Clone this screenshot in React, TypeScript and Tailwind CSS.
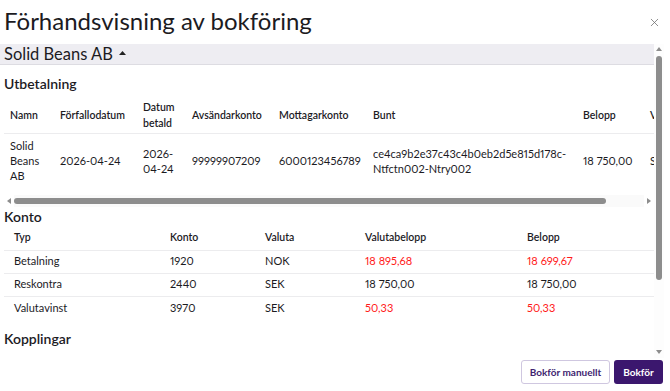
import { X } from "lucide-react";

const payout = {
  name: "Solid Beans AB",
  due: "2026-04-24",
  paid: "2026-04-24",
  from: "99999907209",
  to: "6000123456789",
  batch: "ce4ca9b2e37c43c4b0eb2d5e815d178c-Ntfctn002-Ntry002",
  amount: "18 750,00",
  currency: "SEK",
};

const accounts = [
  { type: "Betalning", account: "1920", currency: "NOK", fx: "18 895,68", amount: "18 699,67", red: true },
  { type: "Reskontra", account: "2440", currency: "SEK", fx: "18 750,00", amount: "18 750,00", red: false },
  { type: "Valutavinst", account: "3970", currency: "SEK", fx: "50,33", amount: "50,33", red: true },
];

function Arrow({ dir }: { dir: "up" | "down" | "left" | "right" }) {
  const points = {
    up: "0,4 3,0 6,4",
    down: "0,0 6,0 3,4",
    left: "4,0 4,6 0,3",
    right: "0,0 4,3 0,6",
  }[dir];
  const vertical = dir === "up" || dir === "down";
  return (
    <svg width={vertical ? 6 : 4} height={vertical ? 4 : 6} viewBox={vertical ? "0 0 6 4" : "0 0 4 6"}>
      <polygon points={points} fill="#8d8d8d" />
    </svg>
  );
}

export default function App() {
  return (
    <div className="flex h-[391px] w-[670px] flex-col bg-white font-['Lato',sans-serif] text-[#1c1b1f] proportional-nums">
      <div className="flex h-[44px] shrink-0 items-center justify-between pl-[4px] pr-[9px]">
        <h1 className="pb-[2px] text-[24px] font-normal leading-none">Förhandsvisning av bokföring</h1>
        <button type="button" className="text-[#6b6b6b]">
          <X size={13} strokeWidth={1.4} />
        </button>
      </div>

      <div className="mr-[6px] flex min-h-0 flex-1">
        <div className="min-w-0 flex-1 overflow-hidden">
          <div className="flex h-[21px] items-center gap-[6px] border-b border-[#dddce2] bg-[#eeedf2] pl-[4px] text-[16.5px] leading-none">
            <span>Solid Beans AB</span>
            <svg width="7" height="4" viewBox="0 0 7 4" className="mt-[-2px]">
              <polygon points="0,4 3.5,0 7,4" fill="#222" />
            </svg>
          </div>

          <div className="pl-[4px]">
            <h2 className="pt-[9px] pb-[3px] text-[14px] font-semibold leading-[20px]">Utbetalning</h2>

            <div className="overflow-hidden">
              <table className="w-[720px] table-fixed border-collapse text-[11px]">
                <colgroup>
                  <col className="w-[56px]" />
                  <col className="w-[83px]" />
                  <col className="w-[49px]" />
                  <col className="w-[87px]" />
                  <col className="w-[94px]" />
                  <col className="w-[210px]" />
                  <col className="w-[67px]" />
                  <col className="w-[74px]" />
                </colgroup>
                <thead>
                  <tr className="border-b border-[#ececee] text-left text-[10.5px]">
                    <th className="py-[2px] pl-[6px] font-semibold leading-[16px]">Namn</th>
                    <th className="py-[2px] font-semibold leading-[16px]">Förfallodatum</th>
                    <th className="py-[2px] font-semibold leading-[16px]">Datum betald</th>
                    <th className="py-[2px] font-semibold leading-[16px]">Avsändarkonto</th>
                    <th className="py-[2px] font-semibold leading-[16px]">Mottagarkonto</th>
                    <th className="py-[2px] font-semibold leading-[16px]">Bunt</th>
                    <th className="py-[2px] font-semibold leading-[16px]">Belopp</th>
                    <th className="py-[2px] font-semibold leading-[16px]">Valuta</th>
                  </tr>
                </thead>
                <tbody>
                  <tr className="leading-[15px]">
                    <td className="py-[4px] pl-[6px] pr-[8px]">{payout.name}</td>
                    <td>{payout.due}</td>
                    <td className="pr-[10px]">{payout.paid}</td>
                    <td>{payout.from}</td>
                    <td>{payout.to}</td>
                    <td className="pr-[10px]">{payout.batch}</td>
                    <td>{payout.amount}</td>
                    <td>{payout.currency}</td>
                  </tr>
                </tbody>
              </table>
            </div>

            <div className="mt-[8px] flex h-[12px] items-center">
              <div className="flex w-[10px] justify-center">
                <Arrow dir="left" />
              </div>
              <div className="flex h-full flex-1 items-center bg-[#fafafa]">
                <div className="h-[6px] w-[592px] rounded-full bg-[#8d8d8d]" />
              </div>
              <div className="flex w-[10px] justify-center">
                <Arrow dir="right" />
              </div>
            </div>

            <h2 className="text-[14px] font-semibold leading-[20px]">Konto</h2>

            <table className="w-full table-fixed border-collapse text-[11px]">
              <colgroup>
                <col className="w-[156px]" />
                <col className="w-[95px]" />
                <col className="w-[100px]" />
                <col className="w-[162px]" />
                <col />
              </colgroup>
              <thead>
                <tr className="border-b border-[#ececee] text-left text-[10.5px]">
                  <th className="h-[23px] pl-[10px] font-semibold">Typ</th>
                  <th className="pl-[10px] font-semibold">Konto</th>
                  <th className="pl-[10px] font-semibold">Valuta</th>
                  <th className="pl-[10px] font-semibold">Valutabelopp</th>
                  <th className="pl-[10px] font-semibold">Belopp</th>
                </tr>
              </thead>
              <tbody>
                {accounts.map((a) => (
                  <tr key={a.type} className="border-b border-[#ececee] last:border-b-0">
                    <td className="h-[23px] pl-[10px]">{a.type}</td>
                    <td className="pl-[10px]">{a.account}</td>
                    <td className="pl-[10px]">{a.currency}</td>
                    <td className={`pl-[10px] ${a.red ? "text-[#ff1a1a]" : ""}`}>{a.fx}</td>
                    <td className={`pl-[10px] ${a.red ? "text-[#ff1a1a]" : ""}`}>{a.amount}</td>
                  </tr>
                ))}
              </tbody>
            </table>

            <h2 className="pt-[10px] text-[14px] font-semibold leading-[20px]">Kopplingar</h2>
          </div>
        </div>

        <div className="flex w-[10px] shrink-0 flex-col items-center bg-[#fdfdfd]">
          <div className="flex h-[10px] items-center">
            <Arrow dir="up" />
          </div>
          <div className="flex-1 pt-[2px]">
            <div className="h-[224px] w-[6px] rounded-full bg-[#8d8d8d]" />
          </div>
          <div className="flex h-[12px] items-center">
            <Arrow dir="down" />
          </div>
        </div>
      </div>

      <div className="flex h-[33px] shrink-0 items-start justify-end gap-[4px] pr-[7px] pt-[2px]">
        <button
          type="button"
          className="h-[24px] w-[89px] rounded-[3px] border border-[#cfc7e0] bg-white text-[10px] font-bold text-[#3f2470]"
        >
          Bokför manuellt
        </button>
        <button
          type="button"
          className="h-[24px] w-[49px] rounded-[3px] bg-[#3b176e] text-[10px] font-bold text-white"
        >
          Bokför
        </button>
      </div>
    </div>
  );
}
